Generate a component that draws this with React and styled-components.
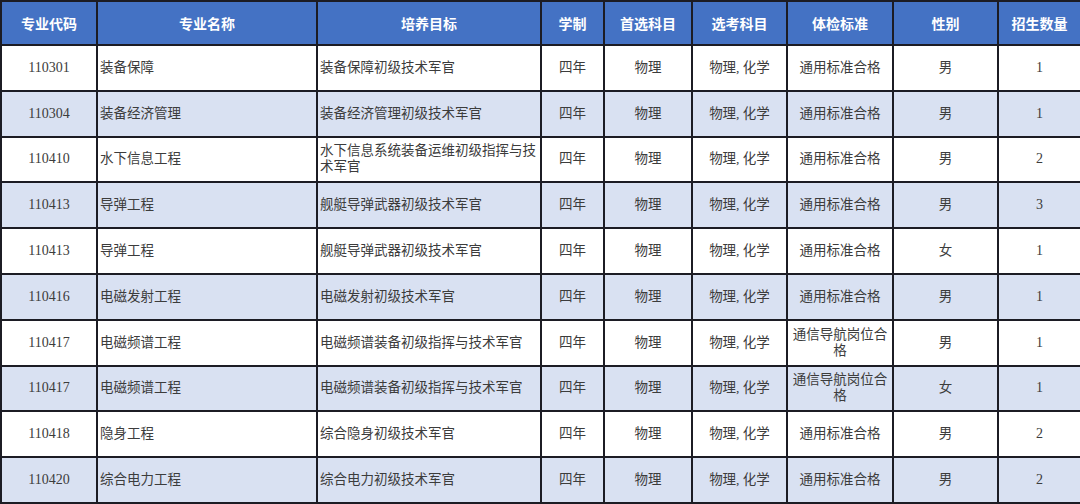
import React from "react";
import styled, { createGlobalStyle } from "styled-components";

const GlobalStyle = createGlobalStyle`
  body {
    margin: 0;
    background: #ffffff;
    font-family: "Liberation Serif", "Noto Sans CJK SC", serif;
  }
`;

const Table = styled.table`
  width: 1080px;
  table-layout: fixed;
  border-collapse: collapse;
  border: 2px solid #1c1c24;
`;

const HeadRow = styled.tr`
  height: 44px;
  background: #4472c4;
`;

const Th = styled.th`
  border: 2px solid #1c1c24;
  color: #ffffff;
  font-family: "Noto Sans CJK SC", "Noto Sans", sans-serif;
  font-size: 14px;
  font-weight: 700;
  text-align: center;
  padding: 0;
`;

const Row = styled.tr`
  height: 45.8px;
  background: ${({ $alt }) => ($alt ? "#d9e1f2" : "#ffffff")};
`;

const Td = styled.td`
  border: 2px solid #1c1c24;
  color: #3c3c3c;
  font-size: ${({ $num }) => ($num ? "14px" : "13.5px")};
  line-height: 16px;
  text-align: ${({ $left }) => ($left ? "left" : "center")};
  padding: 0 2px;
  vertical-align: middle;
`;

const columns = [
  { title: "专业代码", width: 96 },
  { title: "专业名称", width: 220 },
  { title: "培养目标", width: 224 },
  { title: "学制", width: 63 },
  { title: "首选科目", width: 88 },
  { title: "选考科目", width: 95 },
  { title: "体检标准", width: 106 },
  { title: "性别", width: 105 },
  { title: "招生数量", width: 83 },
];

const rows = [
  ["110301", "装备保障", "装备保障初级技术军官", "通用标准合格", "男", "1"],
  ["110304", "装备经济管理", "装备经济管理初级技术军官", "通用标准合格", "男", "1"],
  ["110410", "水下信息工程", "水下信息系统装备运维初级指挥与技术军官", "通用标准合格", "男", "2"],
  ["110413", "导弹工程", "舰艇导弹武器初级技术军官", "通用标准合格", "男", "3"],
  ["110413", "导弹工程", "舰艇导弹武器初级技术军官", "通用标准合格", "女", "1"],
  ["110416", "电磁发射工程", "电磁发射初级技术军官", "通用标准合格", "男", "1"],
  ["110417", "电磁频谱工程", "电磁频谱装备初级指挥与技术军官", "通信导航岗位合格", "男", "1"],
  ["110417", "电磁频谱工程", "电磁频谱装备初级指挥与技术军官", "通信导航岗位合格", "女", "1"],
  ["110418", "隐身工程", "综合隐身初级技术军官", "通用标准合格", "男", "2"],
  ["110420", "综合电力工程", "综合电力初级技术军官", "通用标准合格", "男", "2"],
];

export default function App() {
  return (
    <>
      <GlobalStyle />
      <Table>
        <colgroup>
          {columns.map((c) => (
            <col key={c.title} style={{ width: c.width }} />
          ))}
        </colgroup>
        <thead>
          <HeadRow>
            {columns.map((c) => (
              <Th key={c.title}>{c.title}</Th>
            ))}
          </HeadRow>
        </thead>
        <tbody>
          {rows.map(([code, name, goal, exam, sex, count], i) => (
            <Row key={i} $alt={i % 2 === 1}>
              <Td $num>{code}</Td>
              <Td $left>{name}</Td>
              <Td $left>{goal}</Td>
              <Td>四年</Td>
              <Td>物理</Td>
              <Td>物理,&nbsp;化学</Td>
              <Td>{exam}</Td>
              <Td>{sex}</Td>
              <Td $num>{count}</Td>
            </Row>
          ))}
        </tbody>
      </Table>
    </>
  );
}
